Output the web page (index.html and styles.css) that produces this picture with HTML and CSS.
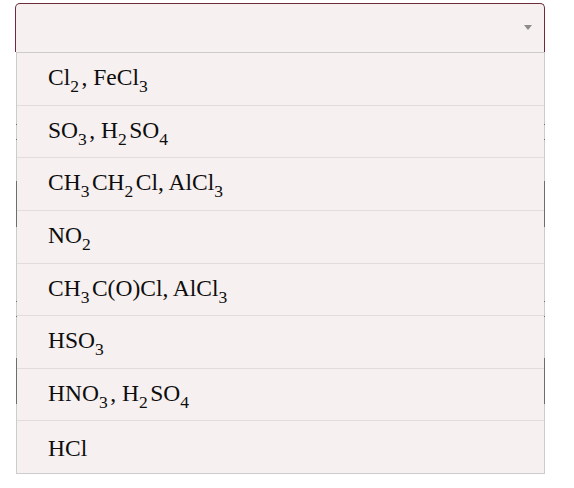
FILE: index.html
```html
<!DOCTYPE html>
<html>
<head>
<meta charset="utf-8">
<link rel="stylesheet" href="styles.css">
</head>
<body>
<div class="page">
  <div class="select">
    <span class="caret"></span>
  </div>
  <div class="under">
    <div class="rule-pair"></div>
    <div class="field"></div>
    <div class="rule-pair second"></div>
    <div class="field"></div>
  </div>
  <ul class="menu">
    <li class="opt"><span class="f">Cl<sub>2</sub>, FeCl<sub>3</sub></span></li>
    <li class="opt"><span class="f">SO<sub>3</sub>, H<sub>2</sub>SO<sub>4</sub></span></li>
    <li class="opt"><span class="f">CH<sub>3</sub>CH<sub>2</sub>Cl, AlCl<sub>3</sub></span></li>
    <li class="opt"><span class="f">NO<sub>2</sub></span></li>
    <li class="opt"><span class="f">CH<sub>3</sub>C(O)Cl, AlCl<sub>3</sub></span></li>
    <li class="opt"><span class="f">HSO<sub>3</sub></span></li>
    <li class="opt"><span class="f">HNO<sub>3</sub>, H<sub>2</sub>SO<sub>4</sub></span></li>
    <li class="opt"><span class="f">HCl</span></li>
  </ul>
</div>
</body>
</html>
```
FILE: styles.css
```css
html, body {
  margin: 0;
  padding: 0;
  background: #ffffff;
}
.page {
  position: relative;
  width: 574px;
  height: 488px;
  padding: 3px 29px 0 15px;
  box-sizing: border-box;
  font-family: "Liberation Serif", "Times New Roman", serif;
}
.select {
  height: 49px;
  box-sizing: border-box;
  border: 1px solid #6e2b3c;
  border-bottom: 0;
  border-radius: 5px 5px 0 0;
  background: #f6f0f0;
  display: flex;
  justify-content: flex-end;
  align-items: center;
  padding-right: 12px;
}
.caret {
  width: 0;
  height: 0;
  border-left: 4.5px solid transparent;
  border-right: 4.5px solid transparent;
  border-top: 5px solid #8c8c8c;
  margin-top: -2px;
}
.under {
  padding-left: 1px;
}
.rule-pair {
  margin-top: 72px;
  height: 16px;
  box-sizing: border-box;
  border-top: 1px solid #8a8a8a;
  border-bottom: 1px solid #8a8a8a;
}
.rule-pair.second {
  margin-top: 74px;
}
.field {
  margin-top: 41px;
  height: 46px;
  box-sizing: border-box;
  border: 1px solid #8a8a8a;
}
.menu {
  position: absolute;
  top: 52px;
  left: 16px;
  width: 529px;
  margin: 0;
  padding: 0;
  list-style: none;
  box-sizing: border-box;
  border: 1px solid rgba(0, 0, 0, 0.2);
  background-clip: padding-box;
}
.opt {
  height: 52.625px;
  box-sizing: border-box;
  background: #f6f0f0;
  display: flex;
  align-items: center;
  padding-left: 31px;
  padding-top: 1px;
  font-size: 23.5px;
  color: #0d0d0d;
  border-top: 1px solid #e2dcdc;
}
.opt:first-child {
  height: 51.625px;
  border-top: 0;
}
.f {
  display: block;
  line-height: 28px;
}
.f sub {
  font-size: 17.5px;
  line-height: 1;
  vertical-align: -7px;
  margin-right: 2.5px;
}
```
